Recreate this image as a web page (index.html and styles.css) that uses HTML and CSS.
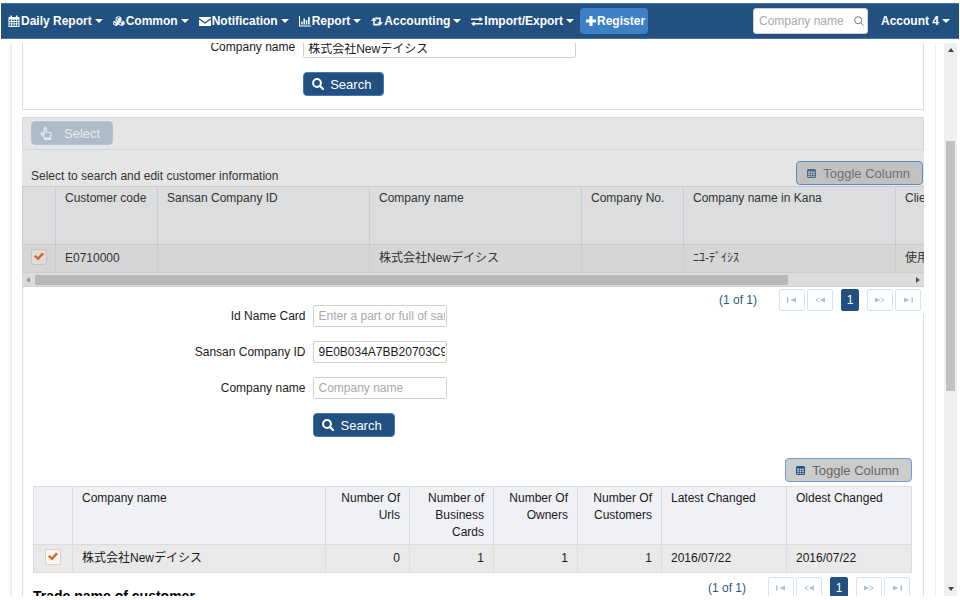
FILE: index.html
```
<!DOCTYPE html>
<html lang="en">
<head>
<meta charset="utf-8">
<title>Customer search</title>
<link rel="stylesheet" href="styles.css">
</head>
<body>
<svg class="defs" width="0" height="0" aria-hidden="true">
  <symbol id="search" viewBox="0 0 12 12"><circle cx="5" cy="5" r="3.9" fill="none" stroke="currentColor" stroke-width="2"/><path d="M7.8 7.8 11 11" stroke="currentColor" stroke-width="2.2" stroke-linecap="round"/></symbol>
  <symbol id="grid" viewBox="0 0 9 9"><path fill-rule="evenodd" d="M1.5 0h6A1.5 1.5 0 0 1 9 1.500v6A1.500 1.500 0 0 1 7.500 9h-6A1.500 1.500 0 0 1 0 7.500v-6A1.500 1.500 0 0 1 1.500 0zM1.200 2.500v1.400h1.700V2.500zm2.500 0v1.400h1.700V2.500zm2.500 0v1.400h1.600V2.500zM1.200 4.600V6h1.700V4.600zm2.500 0V6h1.700V4.600zm2.500 0V6h1.600V4.600zM1.200 6.700v1.200h1.700V6.700zm2.500 0v1.200h1.700V6.700zm2.500 0v1.200h1.600V6.700z" fill="currentColor"/></symbol>
  <symbol id="first" viewBox="0 0 10 6"><path d="M0 .5h1.500v5H0zM9 .5v5L3.500 3z" fill="currentColor"/></symbol>
  <symbol id="prev" viewBox="0 0 10 6"><path d="M4.500 .8.800 3l3.700 2.200" fill="none" stroke="currentColor"/><path d="M10 .5v5L4.500 3z" fill="currentColor"/></symbol>
  <symbol id="next" viewBox="0 0 10 6"><path d="M5.500 .8 9.200 3 5.500 5.200" fill="none" stroke="currentColor"/><path d="M0 .5v5L5.500 3z" fill="currentColor"/></symbol>
  <symbol id="last" viewBox="0 0 10 6"><path d="M8.500 .5H10v5H8.500zM1 .5v5L6.500 3z" fill="currentColor"/></symbol>
</svg>
<header class="nav">
  <nav class="menu">
    <a href="#"><svg class="ico" viewBox="0 0 12 12"><path fill-rule="evenodd" d="M.500 2h2V.500h1.500V2h4V.500h1.500V2h2v10H.500zm1 2.500v1.500h1.700V4.500zm2.700 0v1.500h1.500V4.500zm2.400 0v1.500h1.500V4.500zm2.400 0v1.500h1.500V4.500zM1.500 6.900v1.500h1.700V6.900zm2.700 0v1.500h1.500V6.900zm2.400 0v1.500h1.500V6.900zm2.400 0v1.500h1.500V6.900zM1.500 9.300v1.600h1.700V9.300zm2.700 0v1.600h1.500V9.300zm2.400 0v1.600h1.500V9.300zm2.400 0v1.600h1.500V9.300z" fill="currentColor"/></svg>Daily Report<i class="caret"></i></a>
    <a href="#"><svg class="ico" viewBox="0 0 14 12"><g fill="none" stroke="currentColor" stroke-width="1.100"><path d="M6.500.800 9.300 2v3L6.500 6.200 3.700 5V2zM3.700 2l2.800 1.200L9.300 2M6.500 3.200v3M3.500 5.800l2.800 1.200v3L3.500 11.300.700 10V7zM.700 7l2.800 1.200L6.300 7M3.500 8.200v3M10 5.800 13 7v3l-3 1.300L7 10V7zM7 7l3 1.200L13 7M10 8.200v3"/></g><path d="M6.500 3.500 9 2.300V5L6.500 6zM3.500 8.500 6 7.400V10l-2.500 1zM10 8.500l2.700-1.100V10L10 11z" fill="currentColor"/></svg>Common<i class="caret"></i></a>
    <a href="#"><svg class="ico" viewBox="0 0 12 12"><path d="M0 2h12v1L6 7.300 0 3zM0 4.500l6 4.300 6-4.300V11H0z" fill="currentColor"/></svg>Notification<i class="caret"></i></a>
    <a href="#"><svg class="ico" viewBox="0 0 12 12"><path d="M0 1h1v9.500h11v1H0zM2.200 6.500h1.500V9.500H2.200zm2.300-3H6v6H4.500zm2.300 1.500h1.500v4.500H6.800zM9.100 2h1.600v7.500H9.100z" fill="currentColor"/></svg>Report<i class="caret"></i></a>
    <a href="#"><svg class="ico" viewBox="0 0 12 12"><path d="M2.800 2.500 5.600 5.700H3.700v3.100h3.800l1.300 1.700H2.200V5.700H0zM3.600 2.500h6.200v4.800H12L9.200 10.500 6.400 7.300h1.900V4.200H4.900z" fill="currentColor"/></svg>Accounting<i class="caret"></i></a>
    <a href="#"><svg class="ico" viewBox="0 0 12 12"><path d="M0 3.500h8.500V1.800L12 4.300 8.500 6.800V5.100H0zM12 8H3.500V6.300L0 8.800l3.500 2.500V9.600H12z" fill="currentColor"/></svg>Import/Export<i class="caret"></i></a>
    <a href="#" class="register"><svg class="ico plus" viewBox="0 0 10 10"><path d="M3.500 0h3v3.500H10v3H6.500V10h-3V6.500H0v-3h3.500z" fill="currentColor"/></svg>Register</a>
  </nav>
  <div class="quick"><input type="text" placeholder="Company name" aria-label="Quick company search"><svg viewBox="0 0 10 10"><circle cx="4.200" cy="4.200" r="3.500" fill="none" stroke="#777"/><path d="m6.800 6.800 2.700 2.700" stroke="#777"/></svg></div>
  <a href="#" class="account">Account 4<i class="caret"></i></a>
</header>
<div class="view">
  <main class="page">
    <form class="box form lookup">
      <label for="name1">Company name</label><input id="name1" type="text" value="株式会社Newデイシス">
      <button type="button" class="btn"><svg class="ico"><use href="#search"/></svg>Search</button>
    </form>
    <section class="box results">
      <div class="disabled">
        <div class="toolbar"><button type="button" class="btn select" disabled><svg class="hand" viewBox="0 0 12 13"><path d="M4.200 8V1.600a1 1 0 0 1 2 0V5l3.800.700q1.300.300 1.200 1.500L10.500 10v1H4.500L1 6.800Q.800 5.500 2.200 5.700L4.200 8" fill="none" stroke="currentColor" stroke-width="1.200"/><path d="M4 11h7v2H4z" fill="currentColor"/></svg>Select</button></div>
        <div class="caption"><span>Select to search and edit customer information</span><button type="button" class="btn toggle"><svg><use href="#grid"/></svg>Toggle Column</button></div>
        <div class="clip">
          <table class="grid wide">
            <colgroup><col class="w-check"><col class="w-s"><col class="w-l"><col class="w-l"><col class="w-s"><col class="w-l"><col class="w-s"></colgroup>
            <thead><tr><th></th><th>Customer code</th><th>Sansan Company ID</th><th>Company name</th><th>Company No.</th><th>Company name in Kana</th><th>Client</th></tr></thead>
            <tbody><tr><td class="pick"><input type="checkbox" checked aria-label="Select E0710000"></td><td>E0710000</td><td></td><td>株式会社Newデイシス</td><td></td><td>ﾆﾕ-ﾃﾞｲｼｽ</td><td>使用中</td></tr></tbody>
          </table>
        </div>
        <div class="hbar"><i class="left"></i><span class="track"><span class="thumb"></span></span><i class="right"></i></div>
      </div>
      <div class="pager over"><span>(1 of 1)</span><button type="button" aria-label="First page"><svg><use href="#first"/></svg></button><button type="button" aria-label="Previous page"><svg><use href="#prev"/></svg></button><button type="button" class="current">1</button><button type="button" aria-label="Next page"><svg><use href="#next"/></svg></button><button type="button" aria-label="Last page"><svg><use href="#last"/></svg></button></div>
      <div class="inner">
        <form class="form">
          <label for="card">Id Name Card</label><input id="card" type="text" placeholder="Enter a part or full of sansan name card">
          <label for="sansan">Sansan Company ID</label><input id="sansan" type="text" value="9E0B034A7BB20703C9">
          <label for="name2">Company name</label><input id="name2" type="text" placeholder="Company name">
          <button type="button" class="btn"><svg class="ico"><use href="#search"/></svg>Search</button>
        </form>
        <div class="tools"><button type="button" class="btn toggle"><svg><use href="#grid"/></svg>Toggle Column</button></div>
        <table class="grid cards">
          <colgroup><col class="c-check"><col><col class="c-num"><col class="c-num"><col class="c-num"><col class="c-num"><col class="c-date"><col class="c-date"></colgroup>
          <thead><tr><th></th><th>Company name</th><th class="num">Number Of Urls</th><th class="num">Number of Business Cards</th><th class="num">Number Of Owners</th><th class="num">Number Of Customers</th><th>Latest Changed</th><th>Oldest Changed</th></tr></thead>
          <tbody><tr><td class="pick"><input type="checkbox" checked aria-label="Select company"></td><td>株式会社Newデイシス</td><td class="num">0</td><td class="num">1</td><td class="num">1</td><td class="num">1</td><td>2016/07/22</td><td>2016/07/22</td></tr></tbody>
        </table>
        <div class="foot">
          <h2>Trade name of customer</h2>
          <div class="pager"><span>(1 of 1)</span><button type="button" aria-label="First page"><svg><use href="#first"/></svg></button><button type="button" aria-label="Previous page"><svg><use href="#prev"/></svg></button><button type="button" class="current">1</button><button type="button" aria-label="Next page"><svg><use href="#next"/></svg></button><button type="button" aria-label="Last page"><svg><use href="#last"/></svg></button></div>
        </div>
      </div>
    </section>
  </main>
  <div class="vbar"><i class="up"></i><span class="track"><span class="thumb"></span></span><i class="down"></i></div>
</div>
</body>
</html>
```
FILE: styles.css
```
* { box-sizing: border-box; }
html, body { height: 100%; }
body {
  margin: 0;
  padding: 3px 1px 4px;
  display: flex;
  flex-direction: column;
  gap: 4px;
  overflow: hidden;
  background: #fff;
  color: #1a1a1a;
  font: 12px/17px "Liberation Sans", "Noto Sans CJK JP", sans-serif;
}
input, button { font: inherit; color: inherit; margin: 0; }
input::placeholder { color: #aaa; opacity: 1; }
.defs { position: absolute; }

.nav {
  flex: none;
  height: 36px;
  display: flex;
  align-items: center;
  padding: 0 9px 0 7px;
  background: #215081;
  border: solid #4a72a0;
  border-width: 1px 0;
  color: #fff;
  font-weight: bold;
}
.nav a { color: #fff; text-decoration: none; display: flex; align-items: center; white-space: nowrap; }
.menu { display: flex; align-items: center; gap: 10px; margin-right: auto; }
.ico { width: 12px; height: 12px; flex: none; }
.menu .ico { margin-right: 1px; }
.caret { border: 4px solid transparent; border-top-color: #fff; border-bottom: 0; margin-left: 3px; }
.menu .register { height: 26px; padding: 0 3px 0 6px; margin-left: -4px; background: #3d80c6; border-radius: 4px; }
.menu .plus { width: 10px; height: 10px; margin-right: 1px; }
.quick {
  width: 115px;
  height: 26px;
  display: flex;
  align-items: center;
  padding: 0 3px 0 5px;
  margin-right: 13px;
  background: #fff;
  border: 1px solid #d8d0c8;
  border-radius: 3px;
}
.quick input { flex: 1; min-width: 0; border: 0; padding: 0; outline: 0; background: none; font-weight: normal; }
.quick svg { width: 10px; height: 10px; }

.view { flex: 1; min-height: 0; display: flex; overflow: hidden; gap: 8px; padding: 0 2px 0 9px; }
.page { flex: 1; min-width: 0; overflow: hidden; border: solid #eee; border-width: 0 1px 0 2px; padding: 0 11px 0 10px; }
.box { border: 1px solid #ddd; }

.form { display: grid; grid-template-columns: 31% 1fr; column-gap: 8px; row-gap: 14px; align-items: center; }
.form label { text-align: right; }
.form input {
  width: 134px;
  height: 22px;
  padding: 0 1px 0 4px;
  border: 1px solid #d9cfc6;
  border-radius: 2px;
  background: #fff;
}
.btn {
  height: 24px;
  display: inline-flex;
  align-items: center;
  gap: 6px;
  padding: 0 12px 0 8px;
  border: 1px solid #3f79b8;
  border-radius: 4px;
  background: #215081;
  color: #fff;
  font-size: 13px;
  line-height: 17px;
  white-space: nowrap;
}
.form .btn { grid-column: 2; justify-self: start; }
.lookup { margin: -7px 0 7px; padding: 0 22px 13px 0; border-top: 0; }
.form.lookup input { width: 273px; }

.results { border-top: 0; }
.disabled { margin: 0 -1px; background: #e5e5e5; color: #333; }
.toolbar { display: flex; border: 1px solid #d3d9e2; padding: 3px 8px 4px; }
.select { background: #aebbc8; border-color: #b4c4d6; color: #e8ecf0; gap: 12px; }
.hand { width: 12px; height: 13px; }
.caption { display: flex; justify-content: space-between; align-items: end; padding: 11px 1px 1px 9px; }
.toggle { padding: 0 12px 0 10px; gap: 7px; border-color: #6b9fd8; background: #ccc; color: #666; }
.toggle svg { width: 9px; height: 9px; color: #215081; }
.disabled .toggle { background: #c1c1c1; color: #707070; border-color: #5b8dc4; }
.disabled .toggle svg { color: #47698c; }

.clip { overflow: hidden; }
.grid { border-collapse: collapse; table-layout: fixed; width: 100%; }
.grid th, .grid td { border: 1px solid #dadce1; padding: 3px 9px; text-align: left; font-weight: normal; vertical-align: top; }
.grid th { height: 58px; background: #eff1f6; }
.grid td { height: 28px; background: #e9e9e9; vertical-align: middle; }
.grid td.pick { padding: 0 0 4px; text-align: center; line-height: 0; }
.grid .num { text-align: right; }
.wide { width: 976px; }
.wide th { background: #dbddde; border-color: #c9cbce; }
.wide td { background: #d6d6d6; border-color: #cbcdcf; }
.w-check { width: 33px; }
.w-s { width: 102px; }
.w-l { width: 212px; }
.c-check { width: 39px; }
.c-num { width: 84px; }
.c-date { width: 125px; }

input[type="checkbox"] {
  appearance: none;
  width: 16px;
  height: 16px;
  display: inline-grid;
  place-items: center;
  border: 1px solid #dfd0c4;
  border-radius: 2px;
  background: #f8f5f2;
}
input[type="checkbox"]::before {
  content: "";
  width: 10px;
  height: 8px;
  background: #d0652c;
  clip-path: polygon(0 50%, 18% 30%, 38% 58%, 82% 0, 100% 18%, 40% 100%);
}
.disabled input[type="checkbox"] { background: #dedbd8; border-color: #cfc2b8; }

.hbar { display: flex; align-items: center; gap: 5px; height: 14px; padding: 0 4px; border-bottom: 1px solid #d0d0d0; background: #dcdcdc; }
.hbar .track { flex: 1; }
.hbar .thumb { display: block; width: 86%; height: 10px; background: #b8b8b8; }
.left, .right { border: 3px solid transparent; }
.left { border-right: 4px solid #999; border-left: 0; }
.right { border-left: 4px solid #555; border-right: 0; }

.pager { display: flex; align-items: center; justify-content: flex-end; gap: 2px; padding-right: 2px; color: #2f5680; }
.pager span { margin-right: 20px; }
.pager button {
  width: 26px;
  height: 22px;
  padding: 0;
  display: grid;
  place-items: center;
  border: 1px solid #d3e4f5;
  border-radius: 2px;
  background: #fff;
  color: #aebfce;
}
.pager svg { width: 10px; height: 6px; }
.pager .current { width: 18px; margin: 0 6px; background: #215081; border-color: #215081; color: #fff; }
.over { margin-right: -1px; padding: 2px 3px 3px 0; background: #fff; }

.inner { padding: 0 11px 0 10px; }
.inner .form { margin-top: -9px; }
.tools { display: flex; justify-content: flex-end; margin: 21px 0 4px; }
.foot { display: flex; justify-content: space-between; align-items: start; padding-top: 4px; }
.foot h2 { margin: 11px 0 0; font-size: 14px; line-height: 17px; color: #000; }

.vbar { width: 13px; display: flex; flex-direction: column; align-items: center; padding: 5px 0; background: #f0f0f0; }
.vbar .track { flex: 1; width: 9px; display: flex; flex-direction: column; padding-top: 89px; }
.vbar .thumb { height: 56%; background: #c1c1c1; }
.up, .down { border: 3px solid transparent; }
.up { border-bottom: 4px solid #444; border-top: 0; }
.down { border-top: 4px solid #444; border-bottom: 0; }
```
